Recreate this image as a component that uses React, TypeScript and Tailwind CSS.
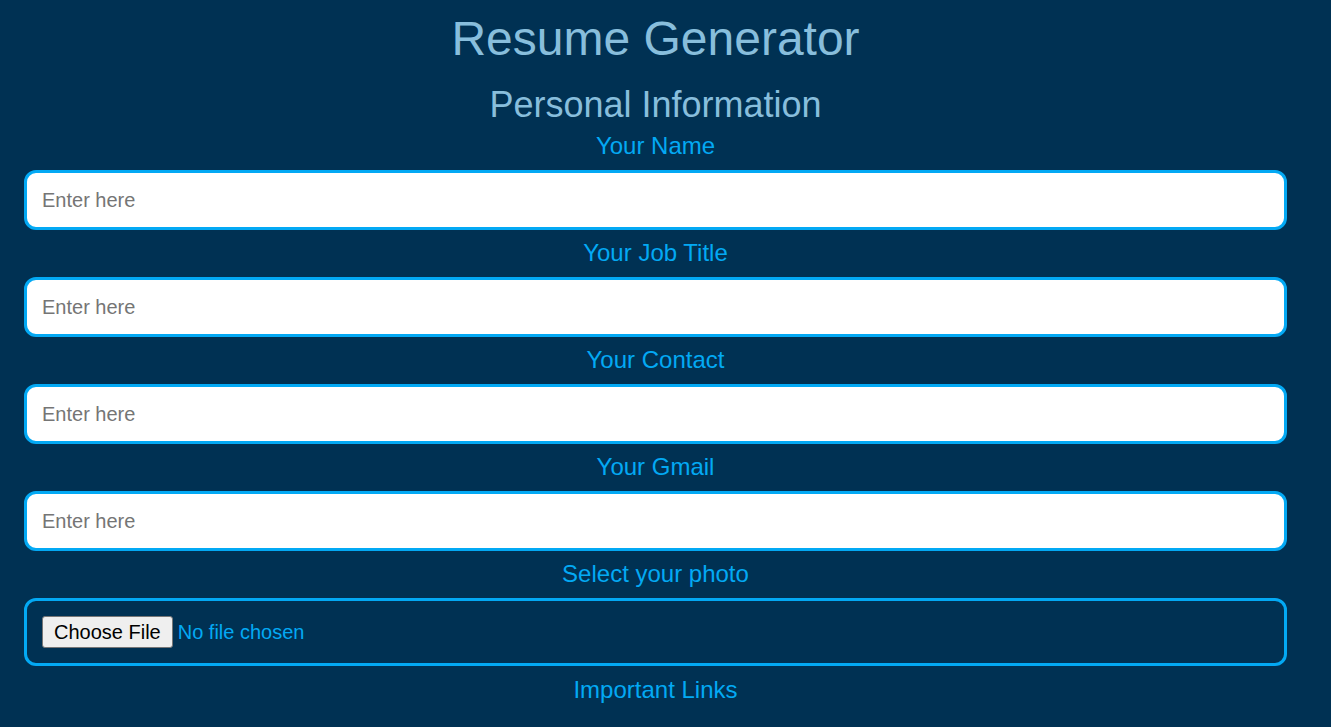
import React from 'react'

const fields = ['Your Name', 'Your Job Title', 'Your Contact', 'Your Gmail']

function Label({ children, className = '' }: { children: React.ReactNode; className?: string }) {
  return (
    <label className={`block mt-[9px] mb-[10px] text-center text-[24px] leading-[28px] text-[#03a9f4] ${className}`}>
      {children}
    </label>
  )
}

export default function App() {
  return (
    <div className="min-h-screen bg-[#003153] font-['Liberation_Sans',Arial,sans-serif]">
      <div className="w-[1311px] pt-[11px]">
        <h1 className="text-center text-[48px] leading-[55px] text-[#88bedc]">Resume Generator</h1>
        <h2 className="mt-[20px] text-center text-[36px] leading-[37px] text-[#88bedc]">Personal Information</h2>

        {fields.map((f) => (
          <div key={f}>
            <Label>{f}</Label>
            <input
              type="text"
              placeholder="Enter here"
              className="block mx-[24px] w-[1263px] h-[60px] px-[15px] rounded-[12px] border-[3px] border-[#03a9f4] bg-white text-[20px] text-black placeholder:text-[#757575] outline-none"
            />
          </div>
        ))}

        <Label>Select your photo</Label>
        <div className="mx-[24px] w-[1263px] h-[68px] flex items-center px-[15px] rounded-[12px] border-[3px] border-[#03a9f4]">
          <input
            type="file"
            className="text-[20px] leading-[23px] text-[#03a9f4] file:h-[32px] file:px-[11px] file:mr-[5px] file:bg-[#efefef] file:text-black file:border file:border-solid file:border-[#767676] file:rounded-[3px]"
          />
        </div>

        <Label className="!mt-[10px]">Important Links</Label>
      </div>
    </div>
  )
}
